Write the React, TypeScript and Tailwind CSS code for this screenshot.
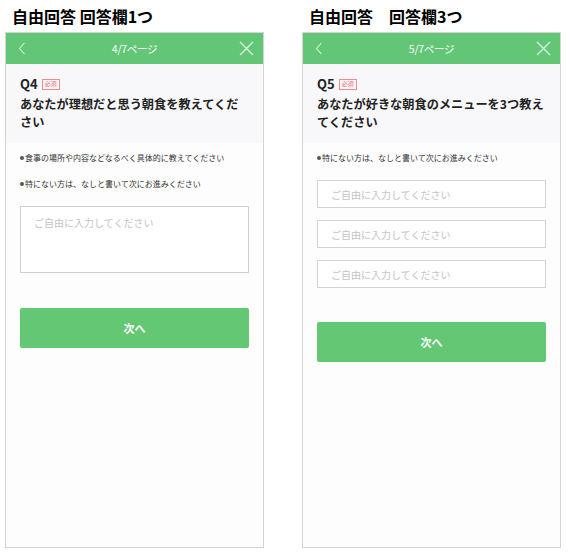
import React from "react";

const font = { fontFamily: '"Noto Sans CJK JP", "Noto Sans", sans-serif' };

function Header({ page }: { page: string }) {
  return (
    <div className="relative flex h-[31px] items-center justify-center bg-[#63c676]">
      <svg className="absolute left-[12px] top-[9px]" width="8" height="13" viewBox="0 0 8 13">
        <path d="M6.5 1 L1.5 6.5 L6.5 12" fill="none" stroke="#d6f2dc" strokeWidth="1.1" />
      </svg>
      <span className="text-[10.5px] text-white tracking-[-0.3px]">{page}</span>
      <svg className="absolute right-[9px] top-[8px]" width="15" height="15" viewBox="0 0 15 15">
        <path d="M1 1 L14 14 M14 1 L1 14" fill="none" stroke="#e0f5e5" strokeWidth="1.2" />
      </svg>
    </div>
  );
}

function Question({ q, text }: { q: string; text: string }) {
  return (
    <div className="bg-[#f8f8fa] px-[14px] pt-[11px] pb-[12px]">
      <div className="flex h-[18px] items-center gap-[4px]">
        <span className="text-[13px] font-bold leading-[18px] text-[#222]">{q}</span>
        <span className="flex h-[11px] items-center border border-[#f08a8a] px-[2px] text-[6px] leading-none text-[#e86a6a]">
          必須
        </span>
      </div>
      <p className="mt-[2px] text-[12.2px] font-bold leading-[18px] text-[#222]">{text}</p>
    </div>
  );
}

function Note({ children, className = "" }: { children: React.ReactNode; className?: string }) {
  return (
    <p className={`flex items-center text-[8px] leading-[14px] text-[#333] ${className}`}>
      <span className="mr-[1px] inline-block h-[4px] w-[4px] rounded-full bg-[#555]" />
      {children}
    </p>
  );
}

function Button({ className = "" }: { className?: string }) {
  return (
    <div
      className={`flex h-[40px] items-center justify-center rounded-[2px] bg-[#63c774] text-[11px] font-bold text-white ${className}`}
    >
      次へ
    </div>
  );
}

export default function App() {
  return (
    <div className="h-[555px] w-[570px] bg-white" style={font}>
      <div className="flex gap-[38px] px-[5px]">
        <div className="flex w-[259px] flex-col">
          <div className="flex h-[32px] items-center pl-[7px] text-[16px] font-bold text-black">
            自由回答 回答欄1つ
          </div>
          <div className="flex h-[516px] flex-col border border-[#d3d3d3] bg-[#fdfdfd]">
            <Header page="4/7ページ" />
            <Question q="Q4" text="あなたが理想だと思う朝食を教えてください" />
            <div className="flex flex-col px-[14px]">
              <Note className="mt-[8px]">食事の場所や内容などなるべく具体的に教えてください</Note>
              <Note className="mt-[12px]">特にない方は、なしと書いて次にお進みください</Note>
              <div className="mt-[15px] h-[67px] border-[1.5px] border-[#cfcfcf] bg-white px-[13px] pt-[8px] text-[10px] text-[#c4c4c4]">
                ご自由に入力してください
              </div>
              <Button className="mt-[35px]" />
            </div>
          </div>
        </div>
        <div className="flex w-[259px] flex-col">
          <div className="flex h-[32px] items-center pl-[7px] text-[16px] font-bold text-black">
            自由回答　回答欄3つ
          </div>
          <div className="flex h-[516px] flex-col border border-[#d3d3d3] bg-[#fdfdfd]">
            <Header page="5/7ページ" />
            <Question q="Q5" text="あなたが好きな朝食のメニューを3つ教えてください" />
            <div className="flex flex-col px-[14px]">
              <Note className="mt-[8px]">特にない方は、なしと書いて次にお進みください</Note>
              <div className="mt-[15px] flex flex-col gap-[12px]">
                {[0, 1, 2].map((i) => (
                  <div
                    key={i}
                    className="flex h-[28px] items-center border-[1.5px] border-[#d3d3d3] bg-white px-[13px] text-[10px] text-[#c4c4c4]"
                  >
                    ご自由に入力してください
                  </div>
                ))}
              </div>
              <Button className="mt-[34px]" />
            </div>
          </div>
        </div>
      </div>
    </div>
  );
}
